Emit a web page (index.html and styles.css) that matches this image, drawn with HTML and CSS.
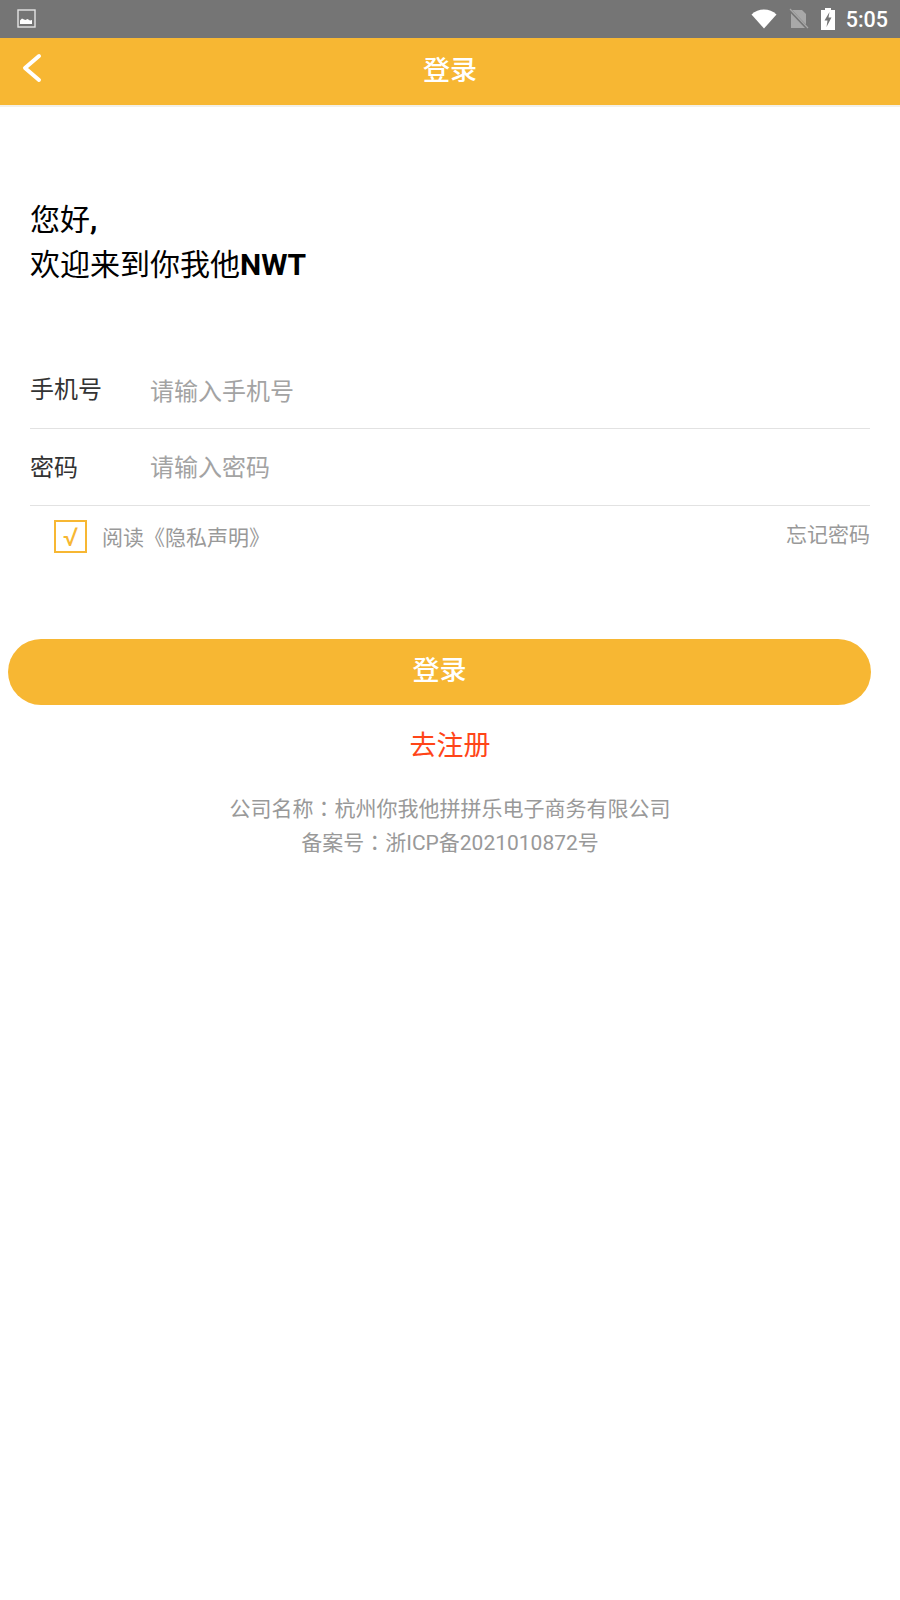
FILE: index.html
```html
<!DOCTYPE html>
<html lang="zh-CN">
<head>
  <meta charset="UTF-8">
  <title>登录</title>
  <link rel="stylesheet" href="styles.css">
</head>
<body>
  <!-- Status bar -->
  <div class="status-bar">
    <svg class="status-photo" width="20" height="20" viewBox="0 0 20 20">
      <rect x="1" y="1" width="17" height="17" fill="none" stroke="#e4e4e4" stroke-width="1.4"/>
      <path d="M3 15V11.5L5 9.500L7 10.500L8.500 11L10.500 10L13 11.500L15 11V15Z" fill="#fff"/>
    </svg>
    <div class="status-right">
      <svg class="status-wifi" width="26" height="20" viewBox="0 0 26 20">
        <path d="M0.500 5.500C4 2.200 8.300 0.500 13 0.500S22 2.200 25.500 5.500L13 19.500Z" fill="#fff"/>
      </svg>
      <svg class="status-sim" width="20" height="22" viewBox="0 0 20 22">
        <path d="M2 2H13L17 6V20H2Z" fill="#a8a8a8"/>
        <path d="M0 1L19 21" stroke="#757575" stroke-width="3"/>
        <path d="M1 1L19 20" stroke="#a8a8a8" stroke-width="1.200"/>
      </svg>
      <svg class="status-battery" width="14" height="22" viewBox="0 0 14 22">
        <path d="M4 0H10V2H14V22H0V2H4Z" fill="#fff"/>
        <path d="M8.500 4L3.500 12.500H6.500L5.500 19L10.500 9.500H7.500Z" fill="#757575"/>
      </svg>
      <span class="status-time">5:05</span>
    </div>
  </div>

  <!-- Title bar -->
  <header class="app-bar">
    <svg class="back-icon" width="24" height="32" viewBox="0 0 24 32">
      <path d="M19 4L5 16L19 28" fill="none" stroke="#fff" stroke-width="4" stroke-linecap="round" stroke-linejoin="round"/>
    </svg>
    <h1 class="app-title">登录</h1>
  </header>

  <main class="page">
    <p class="greeting">您好<b>,</b><br>欢迎来到你我他<b>NWT</b></p>

    <div class="field field-first">
      <span class="field-label">手机号</span>
      <span class="field-hint">请输入手机号</span>
    </div>
    <div class="field">
      <span class="field-label">密码</span>
      <span class="field-hint">请输入密码</span>
    </div>

    <div class="options">
      <div class="agree">
        <span class="check">√</span>
        <span class="agree-text">阅读《隐私声明》</span>
      </div>
      <span class="forgot">忘记密码</span>
    </div>

    <button class="login-btn" type="button">登录</button>
    <a class="register">去注册</a>

    <div class="company">
      <div>公司名称<span class="colon" lang="zh-TW">：</span>杭州你我他拼拼乐电子商务有限公司</div>
      <div>备案号<span class="colon" lang="zh-TW">：</span>浙ICP备2021010872号</div>
    </div>
  </main>
</body>
</html>
```

FILE: styles.css
```css
html, body {
  margin: 0;
  padding: 0;
  background: #fff;
  font-family: Roboto, "Noto Sans CJK SC", sans-serif;
}

.status-bar {
  height: 38px;
  background: #757575;
  display: flex;
  align-items: center;
  justify-content: space-between;
  padding: 0 12px 0 17px;
}

.status-right {
  display: flex;
  align-items: center;
}

.status-wifi { margin-right: 12px; }
.status-sim { margin-right: 12px; }
.status-battery { margin-right: 11px; }

.status-time {
  color: #fff;
  font-size: 21.5px;
  font-weight: 500;
}

.app-bar {
  position: relative;
  height: 67px;
  background: #f7b733;
  border-bottom: 2px solid #f3f0e8;
  display: flex;
  align-items: center;
  justify-content: center;
}

.back-icon {
  position: absolute;
  left: 20px;
  top: 14px;
}

.app-title {
  margin: 0 0 6px;
  color: #fff;
  font-size: 27px;
  font-weight: 500;
}

.page {
  padding: 0 30px;
}

.greeting {
  margin: 0;
  padding-top: 90px;
  color: #000;
  font-size: 30px;
  line-height: 45px;
}

.greeting b {
  font-weight: 700;
}

.field {
  height: 76px;
  border-bottom: 1px solid #e2e2e2;
  display: flex;
  align-items: center;
  font-size: 24px;
}

.field > span {
  margin-bottom: 4px;
}

.field-first {
  margin-top: 65px;
}

.field-first .field-label {
  margin-bottom: 6px;
}

.field-first .field-hint {
  margin-bottom: 2px;
}

.field-label {
  width: 120px;
  color: #333;
}

.field-hint {
  color: #a3a3a3;
}

.options {
  display: flex;
  justify-content: space-between;
  color: #999;
  font-size: 21px;
  padding-top: 14px;
}

.agree {
  display: flex;
  align-items: center;
  gap: 15px;
  margin-left: 24px;
}

.agree-text {
  margin-bottom: 2px;
}

.check {
  width: 29px;
  height: 29px;
  border: 2px solid #f7b733;
  color: #f7b733;
  font-size: 26px;
  display: flex;
  align-items: center;
  justify-content: center;
}

.forgot {
  margin-top: 1px;
  line-height: 28px;
}

.login-btn {
  display: block;
  width: 863px;
  height: 66px;
  margin: 86px 0 0 -22px;
  padding: 0 0 7px;
  border: 0;
  border-radius: 33px;
  background: #f7b733;
  color: #fff;
  font-family: inherit;
  font-size: 27px;
  font-weight: 500;
}

.register {
  display: block;
  margin-top: 23px;
  text-align: center;
  color: #ff4518;
  font-size: 27px;
  line-height: 36px;
}

.company {
  margin-top: 27px;
  text-align: center;
  color: #999;
  font-size: 21px;
  line-height: 32px;
}

.colon {
  font-family: "Noto Sans CJK TC", sans-serif;
}
```
